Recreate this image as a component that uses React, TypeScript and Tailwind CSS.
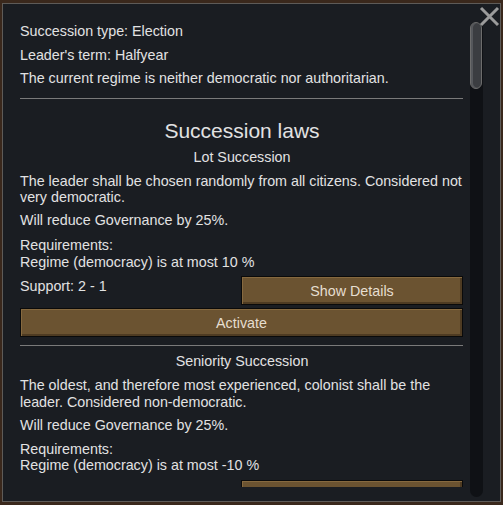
import React from "react";

function GameButton({ children, className = "" }: { children?: React.ReactNode; className?: string }) {
  return (
    <div
      className={
        "flex h-[29px] items-center justify-center border border-[#0a0a0a] bg-[#6b5331] text-[14.3px] text-[#e6ded0] shadow-[inset_1px_1px_0_#86693f,inset_-2px_-2px_0_#4e3b22] " +
        className
      }
    >
      {children}
    </div>
  );
}

export default function App() {
  return (
    <div
      className="h-[505px] w-[503px] overflow-hidden bg-[#3a281c] pl-[2px] pt-[3px]"
      style={{ fontFamily: '"Liberation Sans", Arial, sans-serif' }}
    >
      <div className="relative flex h-[499px] w-[499px] border border-[#5e5b58] bg-[#1a1d22] text-[14.3px] leading-[16px] text-[#e2e2e2]">
        <div className="h-[483px] w-[462px] overflow-hidden pl-[17px]">
          <div className="w-[444px]">
            <p className="mt-[19px]">Succession type: Election</p>
            <p className="mt-[8px]">Leader's term: Halfyear</p>
            <p className="mt-[7px]">The current regime is neither democratic nor authoritarian.</p>
            <div className="mt-[12px] h-px w-[443px] bg-[#7a7a7a]" />
            <h2 className="mt-[20px] text-center text-[21px] leading-[24px]">Succession laws</h2>
            <p className="mt-[6px] text-center">Lot Succession</p>
            <p className="mt-[8px]">
              The leader shall be chosen randomly from all citizens. Considered not very democratic.
            </p>
            <p className="mt-[7px]">Will reduce Governance by 25%.</p>
            <p className="mt-[9px] leading-[17px]">
              Requirements:
              <br />
              Regime (democracy) is at most 10 %
            </p>
            <div className="mt-[5px] flex w-[443px] items-start justify-between">
              <span className="mt-[2px]">Support: 2 - 1</span>
              <GameButton className="w-[222px]">Show Details</GameButton>
            </div>
            <GameButton className="mt-[3px] w-[443px]">Activate</GameButton>
            <div className="mt-[8px] h-px w-[443px] bg-[#7a7a7a]" />
            <p className="mt-[7px] text-center">Seniority Succession</p>
            <p className="mt-[8px] leading-[17px]">
              The oldest, and therefore most experienced, colonist shall be the leader. Considered non-democratic.
            </p>
            <p className="mt-[6px]">Will reduce Governance by 25%.</p>
            <p className="mt-[8px] leading-[16px]">
              Requirements:
              <br />
              Regime (democracy) is at most -10 %
            </p>
            <div className="mt-[7px] flex w-[443px] justify-end">
              <GameButton className="w-[222px]" />
            </div>
          </div>
        </div>
        <div className="ml-[5px] mt-[18px] flex h-[475px] w-[13px] flex-col rounded-full bg-[#0f1115]">
          <div className="h-[67px] w-[12px] rounded-full border border-[#6c6c6c] bg-[#3b3d41] shadow-[inset_2px_0_0_#55575b]" />
        </div>
        <svg
          className="absolute right-[0px] top-[2px]"
          width="21"
          height="21"
          viewBox="0 0 21 21"
          fill="none"
          stroke="#9b9b9b"
          strokeWidth="3"
        >
          <path d="M2 2 L19 19 M19 2 L2 19" />
        </svg>
      </div>
    </div>
  );
}
